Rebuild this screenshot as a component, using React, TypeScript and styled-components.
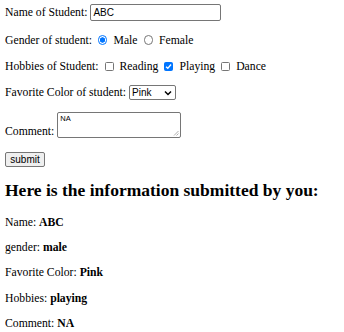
import React from "react";
import styled, { createGlobalStyle } from "styled-components";

const Global = createGlobalStyle`
  html, body { margin: 0; padding: 0; background: #fff; }
  body { font-family: "Liberation Serif", "Times New Roman", serif; font-size: 11.7px; color: #000; }
`;

const Page = styled.div`
  padding: 4px 5px 0 5px;
`;

const Form = styled.form`
  display: flex;
  flex-direction: column;
  align-items: flex-start;
`;

const Row = styled.div<{ $h: number; $mb: number }>`
  display: flex;
  align-items: center;
  height: ${(p) => p.$h}px;
  margin-bottom: ${(p) => p.$mb}px;
  white-space: nowrap;
`;

const BottomRow = styled(Row)`
  align-items: flex-end;
`;

const Label = styled.span`
  margin-right: 3px;
`;

const TextInput = styled.input`
  box-sizing: border-box;
  width: 131px;
  height: 17px;
  border: 1px solid #767676;
  border-radius: 2px;
  padding: 0 2px;
  font-family: "Liberation Sans", Arial, sans-serif;
  font-size: 10px;
  color: #000;
  outline: none;
`;

const Radio = styled.span<{ $on?: boolean }>`
  box-sizing: border-box;
  display: inline-block;
  width: 9.5px;
  height: 9.5px;
  border-radius: 50%;
  border: 1px solid ${(p) => (p.$on ? "#0075ff" : "#767676")};
  background: ${(p) => (p.$on ? "radial-gradient(circle, #0075ff 0 2.4px, #fff 2.9px)" : "#fff")};
  margin: 0 6px 0 6px;
`;

const Check = styled.span<{ $on?: boolean }>`
  box-sizing: border-box;
  display: inline-flex;
  align-items: center;
  justify-content: center;
  width: 9px;
  height: 9px;
  border-radius: 1.5px;
  border: 1px solid ${(p) => (p.$on ? "#0075ff" : "#767676")};
  background: ${(p) => (p.$on ? "#0075ff" : "#fff")};
  margin: 0 6px 0 6px;
`;

const Select = styled.span`
  box-sizing: border-box;
  display: inline-flex;
  align-items: center;
  justify-content: space-between;
  width: 47px;
  height: 15px;
  border: 1px solid #767676;
  border-radius: 2px;
  padding: 0 3px 0 2px;
  font-family: "Liberation Sans", Arial, sans-serif;
  font-size: 10px;
`;

const TextArea = styled.div`
  box-sizing: border-box;
  position: relative;
  width: 124px;
  height: 26px;
  border: 1px solid #767676;
  border-radius: 2px;
  padding: 1px 2px;
  font-family: "Liberation Sans", Arial, sans-serif;
  font-size: 7.5px;
  line-height: 9px;
`;

const Grip = styled.svg`
  position: absolute;
  right: 1px;
  bottom: 1px;
`;

const Button = styled.span`
  box-sizing: border-box;
  display: inline-flex;
  align-items: center;
  justify-content: center;
  width: 40px;
  height: 15px;
  border: 1px solid #767676;
  border-radius: 2px;
  background: #efefef;
  font-family: "Liberation Sans", Arial, sans-serif;
  font-size: 10px;
`;

const Heading = styled.h2`
  font-size: 17.5px;
  font-weight: bold;
  margin: 13px 0 15px 0;
  line-height: 21px;
`;

const Info = styled.p`
  margin: 0 0 11.2px 0;
  line-height: 14px;
  b { font-weight: bold; }
`;

export default function App() {
  return (
    <>
      <Global />
      <Page>
        <Form>
          <Row $h={17} $mb={12}>
            <Label>Name of Student:</Label>
            <TextInput defaultValue="ABC" />
          </Row>
          <Row $h={14} $mb={12}>
            Gender of student:
            <Radio $on />
            Male
            <Radio />
            Female
          </Row>
          <Row $h={14} $mb={12}>
            Hobbies of Student:
            <Check />
            Reading
            <Check $on>
              <svg width="7" height="7" viewBox="0 0 8 8">
                <path d="M1.2 4.2 L3.2 6.1 L6.9 1.7" fill="none" stroke="#fff" strokeWidth="1.6" />
              </svg>
            </Check>
            Playing
            <Check />
            Dance
          </Row>
          <Row $h={15} $mb={11}>
            <Label>Favorite Color of student:</Label>
            <Select>
              Pink
              <svg width="8" height="6" viewBox="0 0 8 6">
                <path d="M1 1.5 L4 4.5 L7 1.5" fill="none" stroke="#000" strokeWidth="1.5" />
              </svg>
            </Select>
          </Row>
          <BottomRow $h={27} $mb={14}>
            <Label>Comment:</Label>
            <TextArea>
              NA
              <Grip width="6" height="6" viewBox="0 0 6 6">
                <path d="M1 5.5 L5.5 1 M3.5 5.5 L5.5 3.5" stroke="#999" strokeWidth="0.8" />
              </Grip>
            </TextArea>
          </BottomRow>
          <Button>submit</Button>
        </Form>
        <Heading>Here is the information submitted by you:</Heading>
        <Info>Name: <b>ABC</b></Info>
        <Info>gender: <b>male</b></Info>
        <Info>Favorite Color: <b>Pink</b></Info>
        <Info>Hobbies: <b>playing</b></Info>
        <Info>Comment: <b>NA</b></Info>
      </Page>
    </>
  );
}
